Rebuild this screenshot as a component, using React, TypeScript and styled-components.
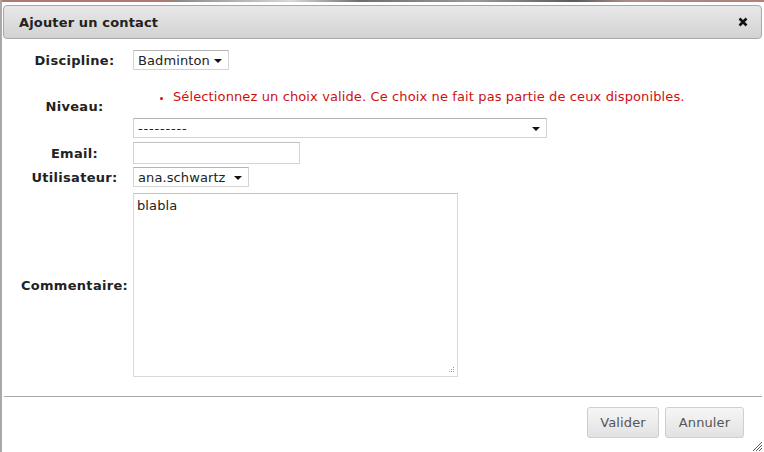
import React, { ReactElement } from 'react';
import styled, { createGlobalStyle } from 'styled-components';

const GlobalStyle = createGlobalStyle`
  html, body {
    margin: 0;
    padding: 0;
    background: #ffffff;
  }
  body {
    font-family: 'DejaVu Sans', Verdana, sans-serif;
    font-size: 13px;
    color: #222222;
  }
`;

const Dialog = styled.div`
  position: relative;
  width: 764px;
  height: 452px;
  box-sizing: border-box;
  background: #ffffff;
  border-left: 2px solid #a9a9a9;
  display: flex;
  flex-direction: column;
  overflow: hidden;
`;

// bit of the page behind the dialog showing through at the top edge
const BackdropStrip = styled.div`
  height: 2px;
  background: linear-gradient(
    to right,
    #b07a72 0%,
    #b07a72 22%,
    #8a8a8a 23%,
    #d8d8d8 38%,
    #6e6e6e 47%,
    #9a9a9a 62%,
    #5a5a5a 75%,
    #a98c86 82%,
    #b5807a 100%
  );
`;

const TitleBar = styled.div`
  margin: 3px 2px 0 1px;
  height: 32px;
  border: 1px solid #a8a8a8;
  border-radius: 4px;
  background: linear-gradient(to bottom, #e8e8e8 0%, #d2d2d2 100%);
  display: flex;
  align-items: center;
  justify-content: space-between;
  padding: 0 12px 0 15px;
`;

const Title = styled.span`
  font-weight: bold;
  font-size: 13px;
  letter-spacing: 0.15px;
  color: #222222;
`;

const CloseBtn = styled.button`
  width: 12px;
  height: 12px;
  padding: 0;
  border: 0;
  background: transparent;
  display: flex;
  align-items: center;
  justify-content: center;
  cursor: pointer;
`;

const Form = styled.div`
  display: grid;
  grid-template-columns: 109px auto;
  column-gap: 4px;
  margin: 11px 0 0 18px;
  align-items: center;
  justify-items: start;
`;

const Label = styled.label<{ gap?: number }>`
  justify-self: center;
  font-weight: bold;
  font-size: 13px;
  letter-spacing: 0.3px;
  color: #222222;
  margin-top: ${(p) => p.gap ?? 0}px;
`;

const Field = styled.div<{ gap?: number }>`
  margin-top: ${(p) => p.gap ?? 0}px;
  display: flex;
  flex-direction: column;
`;

const Select = styled.div<{ width: number }>`
  width: ${(p) => p.width}px;
  height: 20px;
  box-sizing: border-box;
  border: 1px solid #d4d4d4;
  border-top-color: #b4b4b4;
  background: #ffffff;
  display: flex;
  align-items: center;
  justify-content: space-between;
  padding: 0 6px 0 4px;
  font-size: 13px;
  letter-spacing: 0.1px;
  color: #222222;
`;

const Placeholder = styled.span`
  letter-spacing: 0.8px;
`;

const Arrow = styled.span`
  width: 0;
  height: 0;
  border-left: 4px solid transparent;
  border-right: 4px solid transparent;
  border-top: 4px solid #111111;
  margin-top: 1px;
`;

const ErrorList = styled.ul`
  margin: 14px 0 12px 0;
  padding: 0 0 0 40px;
  list-style: disc;
  color: #cc1111;
  font-size: 13px;
  letter-spacing: 0.12px;
  line-height: 18px;

  li::marker {
    font-size: 11px;
  }
`;

const TextInput = styled.div`
  width: 167px;
  height: 22px;
  box-sizing: border-box;
  border: 1px solid #d4d4d4;
  border-top-color: #c0c0c0;
  background: #ffffff;
`;

const TextArea = styled.div`
  position: relative;
  width: 325px;
  height: 184px;
  box-sizing: border-box;
  border: 1px solid #d8d8d8;
  border-top-color: #c4c4c4;
  padding: 4px 3px;
  font-size: 13px;
  letter-spacing: 0.1px;
  color: #222222;
`;

const Grip = styled.svg`
  position: absolute;
  right: 2px;
  bottom: 2px;
`;

const Footer = styled.div`
  margin: 19px 2px 0 2px;
  border-top: 1px solid #a8a8a8;
  display: flex;
  justify-content: flex-end;
  gap: 6px;
  padding: 10px 18px 0 0;
`;

const Button = styled.button<{ width: number }>`
  width: ${(p) => p.width}px;
  height: 31px;
  border: 1px solid #cfcfcf;
  border-radius: 3px;
  background: linear-gradient(to bottom, #f6f6f6 0%, #e2e2e2 100%);
  font-family: 'DejaVu Sans', Verdana, sans-serif;
  font-size: 13px;
  letter-spacing: 0.1px;
  color: #555555;
  padding: 0;
  cursor: pointer;
`;

const ResizeHandle = styled.svg`
  position: absolute;
  right: 2px;
  bottom: 1px;
`;

function App(): ReactElement {
  return (
    <>
      <GlobalStyle />
      <Dialog>
        <BackdropStrip />
        <TitleBar>
          <Title>Ajouter un contact</Title>
          <CloseBtn aria-label="close">
            <svg width="10" height="10" viewBox="0 0 10 10">
              <path d="M1.5 1.5 L8.5 8.5 M8.5 1.5 L1.5 8.5" stroke="#111" strokeWidth="2.6" />
            </svg>
          </CloseBtn>
        </TitleBar>

        <Form>
          <Label>Discipline:</Label>
          <Field>
            <Select width={96}>
              Badminton <Arrow />
            </Select>
          </Field>

          <Label gap={4}>Niveau:</Label>
          <Field gap={4}>
            <ErrorList>
              <li>Sélectionnez un choix valide. Ce choix ne fait pas partie de ceux disponibles.</li>
            </ErrorList>
            <Select width={414}>
              <Placeholder>---------</Placeholder> <Arrow />
            </Select>
          </Field>

          <Label gap={4}>Email:</Label>
          <Field gap={4}>
            <TextInput />
          </Field>

          <Label gap={3}>Utilisateur:</Label>
          <Field gap={3}>
            <Select width={116}>
              ana.schwartz <Arrow />
            </Select>
          </Field>

          <Label gap={6}>Commentaire:</Label>
          <Field gap={6}>
            <TextArea>
              blabla
              <Grip width="8" height="8" viewBox="0 0 8 8">
                <g fill="#9a9a9a">
                  <rect x="6" y="1" width="1" height="1" />
                  <rect x="4" y="3" width="1" height="1" />
                  <rect x="6" y="3" width="1" height="1" />
                  <rect x="2" y="5" width="1" height="1" />
                  <rect x="4" y="5" width="1" height="1" />
                  <rect x="6" y="5" width="1" height="1" />
                </g>
              </Grip>
            </TextArea>
          </Field>
        </Form>

        <Footer>
          <Button width={72}>Valider</Button>
          <Button width={79}>Annuler</Button>
        </Footer>

        <ResizeHandle width="10" height="10" viewBox="0 0 10 10">
          <path d="M1 10 L10 1 M4 10 L10 4 M7 10 L10 7" stroke="#555" strokeWidth="1" />
        </ResizeHandle>
      </Dialog>
    </>
  );
}

export default App;
